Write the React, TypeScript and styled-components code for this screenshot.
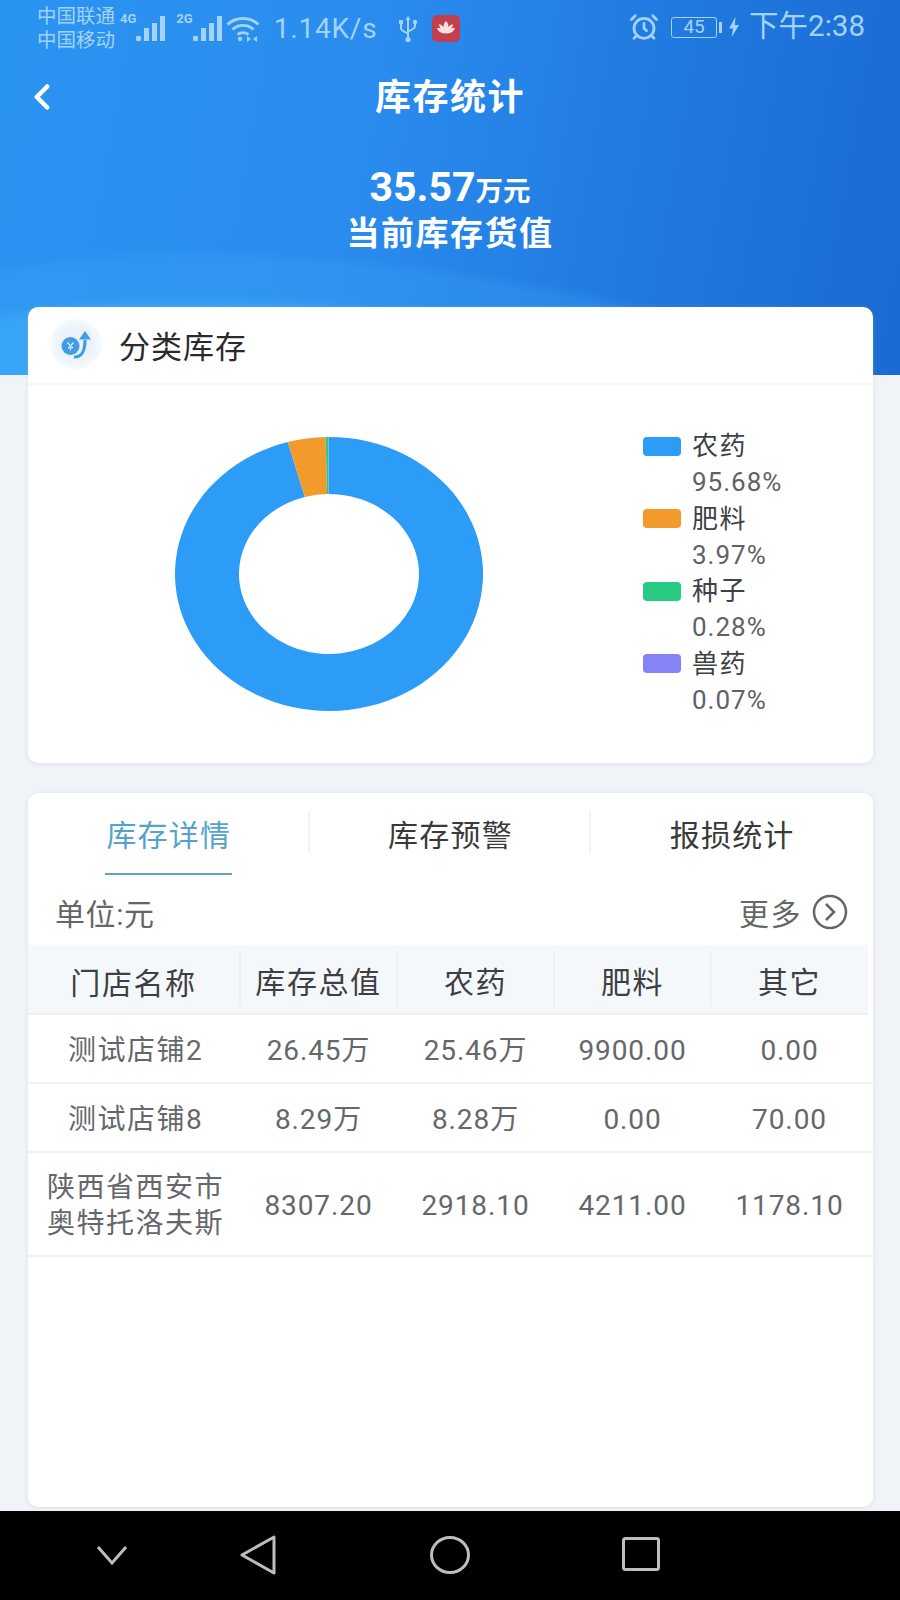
import React, { FC } from 'react'
import styled, { createGlobalStyle } from 'styled-components'
import { AlarmClock, ChevronLeft } from 'lucide-react'

const GlobalStyle = createGlobalStyle`
  html, body {
    margin: 0;
    padding: 0;
    background: #f0f3f7;
  }
  * {
    box-sizing: border-box;
  }
  body {
    font-family: Roboto, 'Noto Sans CJK SC', sans-serif;
  }
`

const STATUS_COLOR = '#a3d3f6'

const Page = styled.div`
  width: 900px;
  height: 1600px;
  display: flex;
  flex-direction: column;
  overflow: hidden;
  background: #f0f3f7;
`

const Hero = styled.header`
  position: relative;
  height: 375px;
  flex: none;
  overflow: hidden;
  color: #fff;
  background: linear-gradient(100deg, #2a94f1 0%, #2a8cee 40%, #1f77de 75%, #1b6ad2 100%);
`

const HeroWaves = styled.svg`
  position: absolute;
  left: 0;
  bottom: 0;
  overflow: visible;
  filter: blur(5px);
  pointer-events: none;
`

const StatusBar = styled.div`
  position: relative;
  height: 56px;
  padding: 1px 35px 0 37px;
  display: flex;
  align-items: center;
  justify-content: space-between;
  color: ${STATUS_COLOR};
`

const StatusGroup = styled.div<{ $raised?: boolean }>`
  display: flex;
  align-items: center;
  margin-top: ${({ $raised }) => ($raised ? -3 : 0)}px;
`

const Carriers = styled.div`
  font-size: 19.5px;
  line-height: 24px;
  width: 83px;
`

const NetLabel = styled.span`
  font-size: 13px;
  font-weight: 700;
  align-self: flex-start;
  margin-top: 6px;
`

const Speed = styled.span`
  font-size: 28px;
  letter-spacing: 0.8px;
  margin: 0 21px 0 14px;
`

const Clock = styled.span`
  font-size: 29.5px;
  line-height: 30px;
  margin-left: 10px;
  padding-bottom: 3px;
`

const Battery = styled.span`
  width: 46px;
  height: 21px;
  margin: 0 2px 0 12px;
  border: 1.5px solid ${STATUS_COLOR};
  border-radius: 3px;
  font-size: 19px;
  line-height: 18px;
  text-align: center;
`

const BatteryCap = styled.span`
  width: 3px;
  height: 11px;
  background: ${STATUS_COLOR};
  margin-right: 7px;
`

const BadgeGap = styled.span`
  width: 14px;
`

const NavRow = styled.div`
  position: relative;
  height: 80px;
  padding-bottom: 4px;
  display: flex;
  align-items: center;
  justify-content: center;
`

const BackButton = styled.span`
  position: absolute;
  left: 21px;
  top: 20px;
  line-height: 0;
`

const Title = styled.h1`
  margin: 0;
  font-size: 36px;
  font-weight: 700;
  letter-spacing: 1.5px;
`

const Summary = styled.div`
  position: relative;
  padding-top: 28px;
  text-align: center;
`

const Amount = styled.div`
  font-size: 41px;
  line-height: 47px;
  font-weight: 700;
`

const AmountUnit = styled.span`
  font-size: 27.5px;
`

const AmountLabel = styled.div`
  font-size: 33px;
  line-height: 38px;
  font-weight: 700;
  letter-spacing: 1.5px;
`

const Content = styled.main`
  position: relative;
  flex: 1;
  margin-top: -68px;
  padding: 0 27px 4px 28px;
  display: flex;
  flex-direction: column;
  gap: 30px;
`

const Card = styled.section`
  background: #fff;
  border-radius: 10px;
  box-shadow: 0 1px 4px rgba(180, 195, 215, 0.35);
  overflow: hidden;
`

const ChartCard = styled(Card)`
  height: 456px;
  flex: none;
`

const TableCard = styled(Card)`
  flex: 1;
`

const CardHeader = styled.div`
  height: 78px;
  padding: 0 0 2px 22px;
  display: flex;
  align-items: center;
  gap: 17px;
  border-bottom: 2px solid #f4f5f7;
`

const CardTitle = styled.h2`
  margin: 0;
  font-size: 31px;
  font-weight: 400;
  letter-spacing: 1px;
  color: #2b2b2b;
`

const ChartBody = styled.div`
  display: flex;
  align-items: flex-start;
  padding: 52px 0 0 147px;
`

const Legend = styled.ul`
  list-style: none;
  margin: -9px 0 0 160px;
  padding: 0;
`

const LegendItem = styled.li`
  display: grid;
  grid-template-columns: 38px auto;
  column-gap: 11px;
  align-items: center;
  font-size: 26px;
  line-height: 36.3px;
  color: #5e6166;
`

const Swatch = styled.span<{ $color: string }>`
  height: 19px;
  border-radius: 4px;
  background: ${({ $color }) => $color};
`

const LegendName = styled.span`
  color: #3f4144;
  letter-spacing: 1.5px;
`

const LegendValue = styled.span`
  grid-column: 2;
  letter-spacing: 1px;
`

const Tabs = styled.div`
  height: 82px;
  display: grid;
  grid-template-columns: repeat(3, 1fr);
`

const TabCell = styled.div`
  display: flex;
  justify-content: center;
  align-items: center;
  height: 100%;
  & + & {
    position: relative;
  }
  & + &::before {
    content: '';
    position: absolute;
    left: -2px;
    top: 18px;
    height: 42px;
    width: 2px;
    background: #f3f4f6;
  }
`

const Tab = styled.span<{ $active?: boolean }>`
  height: 100%;
  width: 127px;
  display: flex;
  align-items: center;
  justify-content: center;
  white-space: nowrap;
  font-size: 30px;
  letter-spacing: 1.2px;
  color: ${({ $active }) => ($active ? '#55a3cc' : '#3a3a3a')};
  border-bottom: 2px solid ${({ $active }) => ($active ? '#5ba5cb' : 'transparent')};
`

const UnitRow = styled.div`
  height: 70px;
  padding: 4px 25px 0 27px;
  display: flex;
  align-items: center;
  justify-content: space-between;
  color: #666;
`

const UnitLabel = styled.span`
  font-size: 30px;
  letter-spacing: 0.6px;
`

const More = styled.span`
  display: flex;
  align-items: center;
  gap: 10px;
  font-size: 30px;
  letter-spacing: 1.5px;
`

const TableGrid = styled.div`
  display: grid;
  grid-template-columns: 211px repeat(4, 157px);
`

const HeadRow = styled(TableGrid)`
  width: 840px;
  height: 70px;
  background: #f5f8fb;
  border-bottom: 2px solid #eef0f3;
`

const HeadCell = styled.div`
  display: flex;
  align-items: center;
  justify-content: center;
  padding-top: 3px;
  font-size: 30px;
  letter-spacing: 1.6px;
  color: #3d3f42;
  & + & {
    border-left: 2px solid #eef1f4;
    margin: 6px 0;
    padding-top: 2px;
  }
`

const BodyRow = styled(TableGrid)<{ $tall?: boolean }>`
  height: ${({ $tall }) => ($tall ? 104 : 69)}px;
  border-bottom: 2px solid #f1f2f4;
`

const BodyCell = styled.div`
  display: flex;
  align-items: center;
  justify-content: center;
  text-align: center;
  padding: 4px 0 0 2px;
  font-size: 28px;
  line-height: 36px;
  letter-spacing: 0.9px;
  color: #65676b;
`

const NameCell = styled(BodyCell)`
  letter-spacing: 1.5px;
  padding-left: 4px;
`

const SystemNav = styled.nav`
  height: 89px;
  flex: none;
  background: #000;
  padding: 24px 0 0 96px;
  display: flex;
  align-items: flex-start;
`

const NavIcon = styled.svg<{ $gap: number }>`
  margin-right: ${({ $gap }) => $gap}px;
  flex: none;
`

const Signal: FC<{ label: string; gap: number }> = ({ label, gap }) => (
  <>
    <NetLabel style={{ marginLeft: gap }}>{label}</NetLabel>
    <svg width="30" height="26" viewBox="0 0 30 26" fill={STATUS_COLOR}>
      <rect x="0" y="20" width="5" height="5" rx="1" />
      <rect x="8" y="12" width="5" height="13" />
      <rect x="16" y="7" width="5" height="18" />
      <rect x="24" y="0" width="5" height="25" />
    </svg>
  </>
)

const Wifi = () => (
  <svg width="34" height="26" viewBox="0 0 34 26" fill="none" stroke={STATUS_COLOR} strokeWidth="2.8" style={{ marginLeft: 3 }}>
    <path d="M1.5 8.500C10 .5 24 .5 32.500 8.500" />
    <path d="M6.500 13.500C12.500 8 21.500 8 27.500 13.500" />
    <path d="M11.500 18.500C14.500 16 19.500 16 22.500 18.500" />
    <circle cx="14" cy="23" r="2.200" fill={STATUS_COLOR} stroke="none" />
    <path d="M21 20v6l4-3zM31 20v6l-4-3z" fill={STATUS_COLOR} stroke="none" />
  </svg>
)

const UsbIcon = () => (
  <svg width="20" height="28" viewBox="0 0 20 28" fill="none" stroke={STATUS_COLOR} strokeWidth="2">
    <path d="M10 2v22" />
    <path d="M10 1l-2.600 4h5.200z" fill={STATUS_COLOR} stroke="none" />
    <circle cx="10" cy="24.500" r="2.600" fill={STATUS_COLOR} stroke="none" />
    <path d="M3 8v5c0 3 3 3.500 7 5.500" />
    <path d="M17 8v3c0 3-3 3.500-7 5.500" />
    <rect x="1" y="5" width="4" height="4" fill={STATUS_COLOR} stroke="none" />
    <circle cx="17" cy="7" r="2.200" fill={STATUS_COLOR} stroke="none" />
  </svg>
)

const LotusBadge = () => (
  <svg width="28" height="27" viewBox="0 0 28 27">
    <rect width="28" height="27" rx="5" fill="#c23f4f" />
    <path
      d="M14 6c2 2 2.600 4 2.300 6 1.500-1.800 3-2.500 4.700-2.800-.3 2-1 3.300-1.800 4.300 1.300-.5 2.600-.6 4-.3-1.500 3.300-4.500 5.300-9.200 5.300s-7.700-2-9.200-5.300c1.400-.3 2.700-.2 4 .3-.8-1-1.500-2.300-1.800-4.300 1.700.3 3.200 1 4.700 2.800-.3-2 .3-4 2.300-6z"
      fill="#f7dfe0"
    />
  </svg>
)

const Bolt = () => (
  <svg width="10" height="20" viewBox="0 0 10 20" fill={STATUS_COLOR}>
    <path d="M6.500 0L0 11.500h4L2.800 20 10 8H5.800z" />
  </svg>
)

const Status = () => (
  <StatusBar>
    <StatusGroup>
      <Carriers>
        中国联通
        <br />
        中国移动
      </Carriers>
      <Signal label="4G" gap={0} />
      <Signal label="2G" gap={10} />
      <Wifi />
      <Speed>1.14K/s</Speed>
      <UsbIcon />
      <BadgeGap />
      <LotusBadge />
    </StatusGroup>
    <StatusGroup $raised>
      <AlarmClock size={30} strokeWidth={2.2} />
      <Battery>45</Battery>
      <BatteryCap />
      <Bolt />
      <Clock>下午2:38</Clock>
    </StatusGroup>
  </StatusBar>
)

const CoinBadge = () => (
  <svg width="52" height="50" viewBox="0 0 52 50">
    <defs>
      <radialGradient id="coinHalo">
        <stop offset="0.6" stopColor="#eaf3fb" />
        <stop offset="1" stopColor="#f6fafd" />
      </radialGradient>
    </defs>
    <ellipse cx="26" cy="25" rx="26" ry="25" fill="url(#coinHalo)" />
    <circle cx="20.500" cy="27" r="9" fill="#419de3" />
    <path d="M17.500 23.500l3 3.500 3-3.500M20.500 27v4.500M18 28.500h5" stroke="#d6ecfb" strokeWidth="1.300" fill="none" />
    <path d="M24 38c7 0 11-4 11-17" stroke="#419de3" strokeWidth="3.200" fill="none" />
    <path d="M35 12l6 8.500h-12z" fill="#419de3" />
  </svg>
)

const SLICES = [
  { name: '农药', value: 95.68, color: '#2d9cf6' },
  { name: '肥料', value: 3.97, color: '#f39a2d' },
  { name: '种子', value: 0.28, color: '#29cb82' },
  { name: '兽药', value: 0.07, color: '#8583f5' },
]

const CX = 154
const CY = 137
const OUTER = { x: 154, y: 137 }
const INNER = { x: 90, y: 80 }

const pointAt = (angle: number, r: { x: number; y: number }) =>
  `${(CX + r.x * Math.sin(angle)).toFixed(2)} ${(CY - r.y * Math.cos(angle)).toFixed(2)}`

const slicePath = (from: number, to: number) => {
  const large = to - from > Math.PI ? 1 : 0
  return [
    `M${pointAt(from, OUTER)}`,
    `A${OUTER.x} ${OUTER.y} 0 ${large} 1 ${pointAt(to, OUTER)}`,
    `L${pointAt(to, INNER)}`,
    `A${INNER.x} ${INNER.y} 0 ${large} 0 ${pointAt(from, INNER)}`,
    'Z',
  ].join(' ')
}

const Donut = () => {
  let start = 0
  return (
    <svg width="308" height="274" viewBox="0 0 308 274" style={{ flex: 'none' }}>
      {SLICES.map((s) => {
        const end = start + (s.value / 100) * Math.PI * 2
        const d = slicePath(start, end)
        start = end
        return <path key={s.name} d={d} fill={s.color} />
      })}
    </svg>
  )
}

const ROWS = [
  { name: ['测试店铺2'], cells: ['26.45万', '25.46万', '9900.00', '0.00'] },
  { name: ['测试店铺8'], cells: ['8.29万', '8.28万', '0.00', '70.00'] },
  { name: ['陕西省西安市', '奥特托洛夫斯'], cells: ['8307.20', '2918.10', '4211.00', '1178.10'], tall: true },
]

const HEADERS = ['门店名称', '库存总值', '农药', '肥料', '其它']

export default function App() {
  return (
    <Page>
      <GlobalStyle />
      <Hero>
        <HeroWaves width="900" height="140" viewBox="0 0 900 140">
          <path d="M-30 40C130 10 250 15 420 35C600 55 760 100 930 170H-30Z" fill="#3aa7f5" opacity="0.3" />
          <path d="M-30 85C180 50 380 65 560 110C640 130 700 150 760 170H-30Z" fill="#3fb0f7" opacity="0.5" />
        </HeroWaves>
        <Status />
        <NavRow>
          <BackButton>
            <ChevronLeft size={42} strokeWidth={2.6} />
          </BackButton>
          <Title>库存统计</Title>
        </NavRow>
        <Summary>
          <Amount>
            35.57<AmountUnit>万元</AmountUnit>
          </Amount>
          <AmountLabel>当前库存货值</AmountLabel>
        </Summary>
      </Hero>
      <Content>
        <ChartCard>
          <CardHeader>
            <CoinBadge />
            <CardTitle>分类库存</CardTitle>
          </CardHeader>
          <ChartBody>
            <Donut />
            <Legend>
              {SLICES.map((s) => (
                <LegendItem key={s.name}>
                  <Swatch $color={s.color} />
                  <LegendName>{s.name}</LegendName>
                  <LegendValue>{s.value.toFixed(2)}%</LegendValue>
                </LegendItem>
              ))}
            </Legend>
          </ChartBody>
        </ChartCard>
        <TableCard>
          <Tabs>
            <TabCell>
              <Tab $active>库存详情</Tab>
            </TabCell>
            <TabCell>
              <Tab>库存预警</Tab>
            </TabCell>
            <TabCell>
              <Tab>报损统计</Tab>
            </TabCell>
          </Tabs>
          <UnitRow>
            <UnitLabel>单位:元</UnitLabel>
            <More>
              更多
              <svg width="36" height="36" viewBox="0 0 36 36" fill="none" stroke="#666" strokeWidth="2.500">
                <circle cx="18" cy="18" r="16" />
                <path d="M14 10l8 8-8 8" />
              </svg>
            </More>
          </UnitRow>
          <HeadRow>
            {HEADERS.map((h) => (
              <HeadCell key={h}>{h}</HeadCell>
            ))}
          </HeadRow>
          {ROWS.map((row) => (
            <BodyRow key={row.name[0]} $tall={row.tall}>
              <NameCell>
                <div>
                  {row.name.map((line) => (
                    <div key={line}>{line}</div>
                  ))}
                </div>
              </NameCell>
              {row.cells.map((c, i) => (
                <BodyCell key={i}>{c}</BodyCell>
              ))}
            </BodyRow>
          ))}
        </TableCard>
      </Content>
      <SystemNav>
        <NavIcon $gap={112} width="32" height="40" viewBox="0 0 32 40" fill="none" stroke="#bdbdbd" strokeWidth="3">
          <path d="M2 12l14 16 14-16" />
        </NavIcon>
        <NavIcon $gap={154} width="36" height="40" viewBox="0 0 36 40" fill="none" stroke="#bdbdbd" strokeWidth="3" strokeLinejoin="round">
          <path d="M34 2L2 20l32 18z" />
        </NavIcon>
        <NavIcon $gap={152} width="40" height="40" viewBox="0 0 40 40" fill="none" stroke="#bdbdbd" strokeWidth="3">
          <ellipse cx="20" cy="20" rx="18.500" ry="17.500" />
        </NavIcon>
        <NavIcon $gap={0} width="38" height="40" viewBox="0 0 38 40" fill="none" stroke="#bdbdbd" strokeWidth="3">
          <rect x="1.500" y="3.500" width="35" height="31" rx="2" />
        </NavIcon>
      </SystemNav>
    </Page>
  )
}
